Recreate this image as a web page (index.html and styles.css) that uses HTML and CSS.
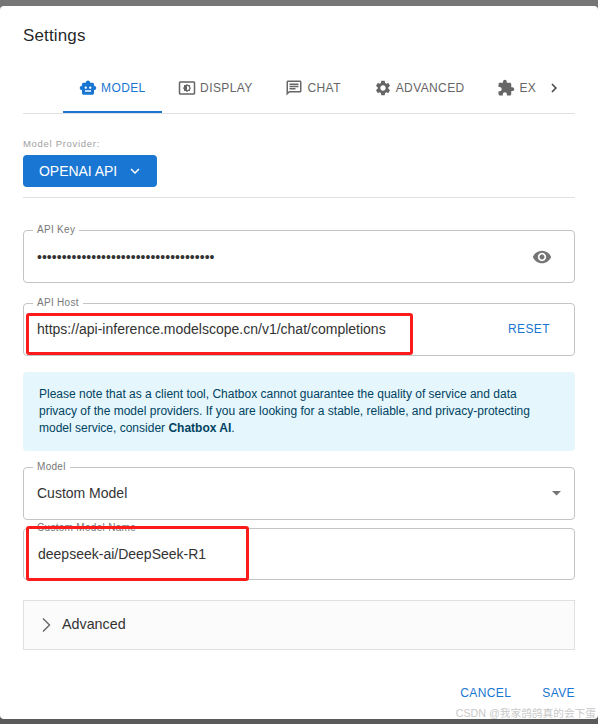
FILE: index.html
```html
<!DOCTYPE html>
<html lang="en">
<head>
<meta charset="utf-8">
<title>Settings</title>
<link rel="stylesheet" href="styles.css">
</head>
<body>
<div class="dialog">
  <h2 class="title">Settings</h2>
  <div class="tabs">
    <div class="tab active">
      <svg class="ticon" viewBox="0 0 24 24"><path d="M20 9V7c0-1.1-.9-2-2-2h-3c0-1.66-1.34-3-3-3S9 3.34 9 5H6c-1.1 0-2 .9-2 2v2c-1.66 0-3 1.34-3 3s1.34 3 3 3v4c0 1.1.9 2 2 2h12c1.1 0 2-.9 2-2v-4c1.66 0 3-1.34 3-3s-1.34-3-3-3zM7.5 11.5c0-.83.67-1.5 1.5-1.5s1.5.67 1.5 1.5S9.83 13 9 13s-1.5-.67-1.5-1.5zM16 17H8v-2h8v2zm-1-4c-.83 0-1.5-.67-1.5-1.5S14.17 10 15 10s1.5.67 1.5 1.5S15.83 13 15 13z"/></svg>
      <span>MODEL</span>
    </div>
    <div class="tab">
      <svg class="ticon" viewBox="0 0 24 24"><path d="M21 3H3c-1.1 0-2 .9-2 2v14c0 1.1.9 2 2 2h18c1.1 0 2-.9 2-2V5c0-1.1-.9-2-2-2zm0 16.01H3V4.99h18v14.02zM8 16h2.5l1.5 1.5 1.5-1.5H16v-2.5l1.5-1.5-1.5-1.5V8h-2.5L12 6.5 10.5 8H8v2.5L6.5 12 8 13.5V16zm4-7c1.66 0 3 1.34 3 3s-1.34 3-3 3V9z"/></svg>
      <span>DISPLAY</span>
    </div>
    <div class="tab">
      <svg class="ticon" viewBox="0 0 24 24"><path d="M20 2H4c-1.1 0-1.99.9-1.99 2L2 22l4-4h14c1.1 0 2-.9 2-2V4c0-1.1-.9-2-2-2zm0 14H5.17L4 17.17V4h16v12zM6 12h8v2H6zm0-3h12v2H6zm0-3h12v2H6z"/></svg>
      <span>CHAT</span>
    </div>
    <div class="tab">
      <svg class="ticon" viewBox="0 0 24 24"><path d="M19.14 12.94c.04-.3.06-.61.06-.94 0-.32-.02-.64-.07-.94l2.03-1.58c.18-.14.23-.41.12-.61l-1.92-3.32c-.12-.22-.37-.29-.59-.22l-2.39.96c-.5-.38-1.03-.7-1.62-.94l-.36-2.54c-.04-.24-.24-.41-.48-.41h-3.84c-.24 0-.43.17-.47.41l-.36 2.54c-.59.24-1.13.57-1.62.94l-2.39-.96c-.22-.08-.47 0-.59.22L2.74 8.87c-.12.21-.08.47.12.61l2.03 1.58c-.05.3-.09.63-.09.94s.02.64.07.94l-2.03 1.58c-.18.14-.23.41-.12.61l1.92 3.32c.12.22.37.29.59.22l2.39-.96c.5.38 1.03.7 1.62.94l.36 2.54c.05.24.24.41.48.41h3.84c.24 0 .44-.17.47-.41l.36-2.54c.59-.24 1.13-.56 1.62-.94l2.39.96c.22.08.47 0 .59-.22l1.92-3.32c.12-.22.07-.47-.12-.61l-2.01-1.58zM12 15.6c-1.98 0-3.6-1.62-3.6-3.6s1.62-3.6 3.6-3.6 3.6 1.62 3.6 3.6-1.62 3.6-3.6 3.6z"/></svg>
      <span>ADVANCED</span>
    </div>
    <div class="tab cut">
      <svg class="ticon" viewBox="0 0 24 24"><path d="M20.5 11H19V7c0-1.1-.9-2-2-2h-4V3.5C13 2.12 11.88 1 10.5 1S8 2.12 8 3.5V5H4c-1.1 0-1.99.9-1.99 2v3.8H3.5c1.49 0 2.7 1.21 2.7 2.7s-1.21 2.7-2.7 2.7H2V20c0 1.1.9 2 2 2h3.8v-1.5c0-1.49 1.21-2.7 2.7-2.7 1.49 0 2.7 1.21 2.7 2.7V22H17c1.1 0 2-.9 2-2v-4h1.5c1.38 0 2.5-1.12 2.5-2.5S21.88 11 20.5 11z"/></svg>
      <span>EX</span>
    </div>
    <svg class="scroll" viewBox="0 0 24 24"><path d="M10 6 8.59 7.41 13.17 12l-4.58 4.59L10 18l6-6z"/></svg>
  </div>

  <div class="provider">
    <div class="provider-label">Model Provider:</div>
    <div class="provider-btn">
      <span>OPENAI API</span>
      <svg class="provider-caret" viewBox="0 0 24 24"><path d="M7.41 8.59 12 13.17l4.59-4.58L18 10l-6 6-6-6z"/></svg>
    </div>
  </div>

  <div class="field key">
    <span class="legend">API Key</span>
    <span class="value dots">••••••••••••••••••••••••••••••••••••</span>
    <svg class="eye" viewBox="0 0 24 24"><path d="M12 4.5C7 4.5 2.73 7.61 1 12c1.73 4.39 6 7.5 11 7.5s9.27-3.11 11-7.5c-1.73-4.39-6-7.5-11-7.5zM12 17c-2.76 0-5-2.24-5-5s2.24-5 5-5 5 2.24 5 5-2.24 5-5 5zm0-8c-1.66 0-3 1.34-3 3s1.34 3 3 3 3-1.34 3-3-1.34-3-3-3z"/></svg>
  </div>

  <div class="field host">
    <span class="legend">API Host</span>
    <span class="value">https://api-inference.modelscope.cn/v1/chat/completions</span>
    <span class="reset">RESET</span>
  </div>

  <div class="alert">Please note that as a client tool, Chatbox cannot guarantee the quality of service and data privacy of the model providers. If you are looking for a stable, reliable, and privacy-protecting model service, consider <b>Chatbox AI</b>.</div>

  <div class="field model">
    <span class="legend">Model</span>
    <span class="value">Custom Model</span>
    <svg class="drop" viewBox="0 0 10 5"><path d="M0 0h10L5 5z"/></svg>
  </div>

  <div class="field custom">
    <span class="legend">Custom Model Name</span>
    <span class="value">deepseek-ai/DeepSeek-R1</span>
  </div>

  <div class="accordion">
    <svg class="acc-icon" viewBox="0 0 24 24"><path d="M9 5.5 15.5 12 9 18.5" fill="none" stroke="#666" stroke-width="1.4"/></svg>
    <span class="acc-text">Advanced</span>
  </div>

  <div class="actions">
    <span>CANCEL</span>
    <span>SAVE</span>
  </div>

  <div class="mark mark-host"></div>
  <div class="mark mark-name"></div>
</div>
<div class="watermark">CSDN @我家鸽鸽真的会下蛋</div>
</body>
</html>
```
FILE: styles.css
```css
* { box-sizing: border-box; }
html, body { margin: 0; padding: 0; }
body {
  width: 598px;
  height: 724px;
  padding-top: 6px;
  background: linear-gradient(to bottom, #767676 0, #767676 6px, #5a5a5a 719px);
  font-family: "Liberation Sans", Arial, sans-serif;
  color: rgba(0,0,0,.87);
  overflow: hidden;
  position: relative;
}
.dialog {
  position: relative;
  width: 598px;
  height: 713px;
  background: #fff;
  border-radius: 4px;
  padding: 0 23px;
  display: flex;
  flex-direction: column;
}
.title {
  margin: 0;
  padding-top: 20px;
  height: 58px;
  font-size: 17px;
  line-height: 20px;
  font-weight: 400;
  letter-spacing: .15px;
}
.tabs {
  height: 50px;
  border-bottom: 1px solid #e0e0e0;
  display: flex;
  padding-left: 40px;
  color: #666;
  font-size: 12px;
  letter-spacing: .4px;
}
.tab {
  display: flex;
  align-items: center;
  gap: 4px;
  height: 49px;
  padding: 0 16.8px 2px 16px;
  fill: #666;
  line-height: 1;
}
.tab.active {
  color: #1976d2;
  fill: #1976d2;
  border-bottom: 2px solid #1976d2;
  padding-bottom: 0;
  padding-right: 16.4px;
}
.tab.cut { padding-right: 6px; }
.ticon { width: 18px; height: 18px; flex: none; }
.scroll { width: 18px; height: 18px; align-self: center; margin: 0 0 2px 3px; fill: #444; }
.provider {
  height: 84px;
  padding-top: 24px;
  border-bottom: 1px solid #e0e0e0;
}
.provider-label {
  font-size: 9.5px;
  line-height: 11px;
  color: #a0a0a0;
  letter-spacing: .7px;
  margin-bottom: 6px;
}
.provider-btn {
  width: 134px;
  height: 32px;
  background: #1976d2;
  border-radius: 4px;
  color: #fff;
  font-size: 14px;
  display: flex;
  align-items: center;
  padding-left: 16px;
  gap: 6px;
  fill: #fff;
  letter-spacing: -.05px;
}
.provider-caret { width: 18px; height: 18px; margin-left: 3px; }
.field {
  position: relative;
  padding: 0 13px;
  border: 1px solid #c4c4c4;
  border-radius: 4px;
  display: flex;
  align-items: center;
  justify-content: space-between;
  background: #fff;
  height: 53px;
}
.legend {
  position: absolute;
  left: 9px;
  top: -7px;
  font-size: 10px;
  line-height: 12px;
  color: #777;
  padding: 0 4px;
  letter-spacing: .3px;
  background: #fff;
}
.value { font-size: 14px; line-height: 20px; color: #333; }
.host .value, .model .value, .reset { margin-bottom: 2px; }
.dots { letter-spacing: .03px; }
.key { margin-top: 32px; }
.eye { width: 20px; height: 20px; fill: #757575; margin-right: 9px; }
.host { margin-top: 20px; }
.reset { color: #1976d2; font-size: 12px; letter-spacing: .4px; margin-right: 11px; }
.alert {
  margin-top: 16px;
  height: 79px;
  background: #e5f6fd;
  border-radius: 4px;
  padding: 14px 30px 0 16px;
  font-size: 12px;
  line-height: 17px;
  color: #014361;
}
.model { margin-top: 16px; }
.drop { width: 9px; height: 4.5px; fill: #757575; }
.custom { height: 52px; margin-top: 8px; padding-left: 14px; }
.accordion {
  margin-top: 20px;
  height: 50px;
  background: #fbfbfb;
  border: 1px solid #e0e0e0;
  display: flex;
  align-items: center;
  padding-left: 10px;
  gap: 4px;
  font-size: 14.3px;
  color: #333;
}
.acc-icon { width: 24px; height: 24px; flex: none; }
.acc-text { margin-bottom: 2px; }
.actions {
  margin-top: 36px;
  display: flex;
  justify-content: flex-end;
  gap: 31px;
  font-size: 12px;
  line-height: 14px;
  color: #1976d2;
  letter-spacing: .4px;
}
.mark {
  position: absolute;
  border: 3px solid #fb1b1b;
  border-radius: 3px;
}
.mark-host { left: 26px; top: 307px; width: 387px; height: 42px; }
.mark-name { left: 26px; top: 520px; width: 223px; height: 55px; }
.watermark {
  position: absolute;
  right: 2px;
  top: 706px;
  font-size: 10.7px;
  line-height: 14px;
  color: #c9c9c9;
  font-family: "Liberation Sans", "Noto Sans CJK SC", sans-serif;
  white-space: nowrap;
}
```
